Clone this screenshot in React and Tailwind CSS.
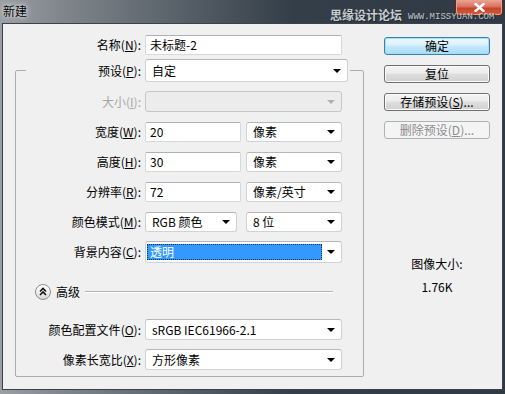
import React from 'react'

function Key({ children }) {
  return <span className="underline underline-offset-[1px]">{children}</span>
}

function Arrow({ muted }) {
  return (
    <span
      className={`mr-[6px] h-0 w-0 shrink-0 border-x-[4px] border-t-[4px] border-x-transparent ${
        muted ? 'border-t-[#b0b0b0]' : 'border-t-black'
      }`}
    />
  )
}

function Input({ className = '', children }) {
  return (
    <div
      className={`flex h-full items-center rounded-[2px] border border-[#d6d8dc] border-t-[#adb1b7] bg-white pl-[4px] ${className}`}
    >
      {children}
    </div>
  )
}

function Select({ className = '', children, disabled }) {
  return (
    <div
      className={`flex h-full items-center justify-between rounded-[3px] border pl-[6px] ${
        disabled ? 'border-[#c4c6c9] bg-[#ececec]' : 'border-[#cfd2d6] border-t-[#b4b8bd] bg-white'
      } ${className}`}
    >
      <span className="whitespace-nowrap">{children}</span>
      <Arrow muted={disabled} />
    </div>
  )
}

function Row({ label, k, w = 'w-[125px]', muted, children }) {
  return (
    <div className="flex h-[21px] items-center gap-[4px]">
      <span className={`shrink-0 text-right ${w} ${muted ? 'text-[#a6a6a6]' : 'text-black'}`}>
        {label}(<Key>{k}</Key>):
      </span>
      {children}
    </div>
  )
}

function Button({ children, kind }) {
  const look = {
    default:
      'border-[#3c7fb1] bg-[linear-gradient(#eef8fe_0%,#dcf1fc_45%,#c4e8fd_50%,#aadcf6_100%)] shadow-[inset_0_0_0_1px_#9ee2f7] text-black',
    normal:
      'border-[#707070] bg-[linear-gradient(#f4f4f4_0%,#ececec_45%,#dedede_50%,#d0d0d0_100%)] shadow-[inset_0_0_0_1px_#fbfbfb] text-black',
    disabled: 'border-[#adb2b5] bg-[#f4f4f4] text-[#8c8c8c]'
  }[kind]
  return (
    <div className={`flex h-[18px] items-center justify-center rounded-[3px] border ${look}`}>{children}</div>
  )
}

export default function App() {
  return (
    <div className="flex h-[394px] w-[505px] flex-col bg-[linear-gradient(90deg,#9a9fa4_0%,#80868c_12%,#545d65_38%,#343e48_58%,#303a44_100%)] px-[2px] pb-[4px] font-['Noto_Sans_CJK_SC',sans-serif] text-[12px] leading-[14px]">
      {/* title bar */}
      <div className="relative flex h-[23px] shrink-0 items-start justify-between">
        <span className="pl-[1px] pt-[4px] text-[12px] leading-[14px] text-black [text-shadow:0_0_6px_#e8eaec,0_0_3px_#e8eaec]">
          新建
        </span>
        <div className="flex h-[16px] w-[48px] items-center justify-center rounded-b-[4px] border border-t-0 border-[#5a2a20] bg-[linear-gradient(#eba596_0%,#d8705c_45%,#c7432a_55%,#d35d3e_100%)] shadow-[inset_0_0_0_1px_#e9a08f]">
          <svg width="11" height="9" viewBox="0 0 11 9">
            <path d="M1.5 1 L9.5 8 M9.5 1 L1.5 8" stroke="#fff" strokeWidth="2.4" strokeLinecap="square" />
          </svg>
        </div>
        <span className="absolute left-[328px] top-[8px] whitespace-nowrap text-[12px] font-semibold leading-[14px] text-[#c9ccce] [text-shadow:1px_1px_0_#1f272e]">
          思缘设计论坛
        </span>
        <span className="absolute left-[406px] top-[12px] whitespace-nowrap font-['Liberation_Mono',monospace] text-[9px] leading-[10px] text-[#c3c7ca] [text-shadow:1px_1px_0_#1f272e]">
          WWW.MISSYUAN.COM
        </span>
      </div>

      {/* client */}
      <div className="flex flex-1 border border-[#3a434c] bg-[#f0f0f0]">
        <div className="flex flex-col pt-[11px]">
          <div className="flex h-[20px] items-center gap-[4px]">
            <span className="w-[138px] shrink-0 text-right">
              名称(<Key>N</Key>):
            </span>
            <Input className="w-[197px]">未标题-2</Input>
          </div>

          <fieldset className="ml-[12px] mt-[4px] w-[349px] rounded-[2px] border border-[#a9adb1] pb-[6px]">
            <legend className="ml-[10px] px-[2px]">
              <div className="flex h-[23px] items-center gap-[4px]">
                <span className="w-[113px] shrink-0 text-right">
                  预设(<Key>P</Key>):
                </span>
                <Select className="w-[203px]">自定</Select>
              </div>
            </legend>

            <div className="mt-[9px] flex flex-col gap-[9px]">
              <Row label="大小" k="I" muted>
                <Select className="w-[197px]" disabled />
              </Row>
              <Row label="宽度" k="W">
                <div className="flex h-[20px] gap-[5px]">
                  <Input className="w-[96px]">20</Input>
                  <Select className="w-[96px]">像素</Select>
                </div>
              </Row>
              <Row label="高度" k="H">
                <div className="flex h-[20px] gap-[5px]">
                  <Input className="w-[96px]">30</Input>
                  <Select className="w-[96px]">像素</Select>
                </div>
              </Row>
              <Row label="分辨率" k="R">
                <div className="flex h-[20px] gap-[5px]">
                  <Input className="w-[96px]">72</Input>
                  <Select className="w-[96px]">像素/英寸</Select>
                </div>
              </Row>
              <Row label="颜色模式" k="M">
                <div className="flex h-[20px] gap-[9px]">
                  <Select className="w-[92px]">RGB 颜色</Select>
                  <Select className="w-[96px]">8 位</Select>
                </div>
              </Row>
              <Row label="背景内容" k="C">
                <div className="flex h-[22px] w-[197px] items-center justify-between rounded-[3px] border border-[#cfd2d6] border-t-[#b4b8bd] bg-white pl-[1px]">
                  <span className="flex h-[16px] w-[175px] items-center border border-dotted border-[#10325a] bg-[#3399ff] pl-[2px] text-white">
                    透明
                  </span>
                  <Arrow />
                </div>
              </Row>
            </div>

            <div className="ml-[19px] mr-[30px] mt-[22px] flex h-[16px] items-center gap-[5px]">
              <div className="flex h-[16px] w-[16px] shrink-0 items-center justify-center rounded-full border border-[#8c8e90] bg-[linear-gradient(#ffffff_0%,#f0f0f0_50%,#d6d6d6_100%)]">
                <svg width="12" height="12" viewBox="0 0 12 12">
                  <path
                    d="M3 5.5 L6 2.5 L9 5.5 M3 9 L6 6 L9 9"
                    fill="none"
                    stroke="#111"
                    strokeWidth="1.6"
                  />
                </svg>
              </div>
              <span>高级</span>
              <div className="h-0 flex-1 border-b border-t border-b-white border-t-[#b0b3b6]" />
            </div>

            <div className="mt-[19px] flex flex-col gap-[9px]">
              <Row label="颜色配置文件" k="O">
                <Select className="w-[197px]">sRGB IEC61966-2.1</Select>
              </Row>
              <Row label="像素长宽比" k="X">
                <Select className="w-[197px]">方形像素</Select>
              </Row>
            </div>
          </fieldset>
        </div>

        <div className="ml-auto mr-[12px] flex w-[106px] flex-col pt-[13px]">
          <div className="flex flex-col gap-[10px]">
            <Button kind="default">确定</Button>
            <Button kind="normal">复位</Button>
            <Button kind="normal">
              存储预设(<Key>S</Key>)...
            </Button>
            <Button kind="disabled">
              删除预设(<Key>D</Key>)...
            </Button>
          </div>
          <span className="mt-[118px] text-center">图像大小:</span>
          <span className="mt-[9px] text-center">1.76K</span>
        </div>
      </div>
    </div>
  )
}
